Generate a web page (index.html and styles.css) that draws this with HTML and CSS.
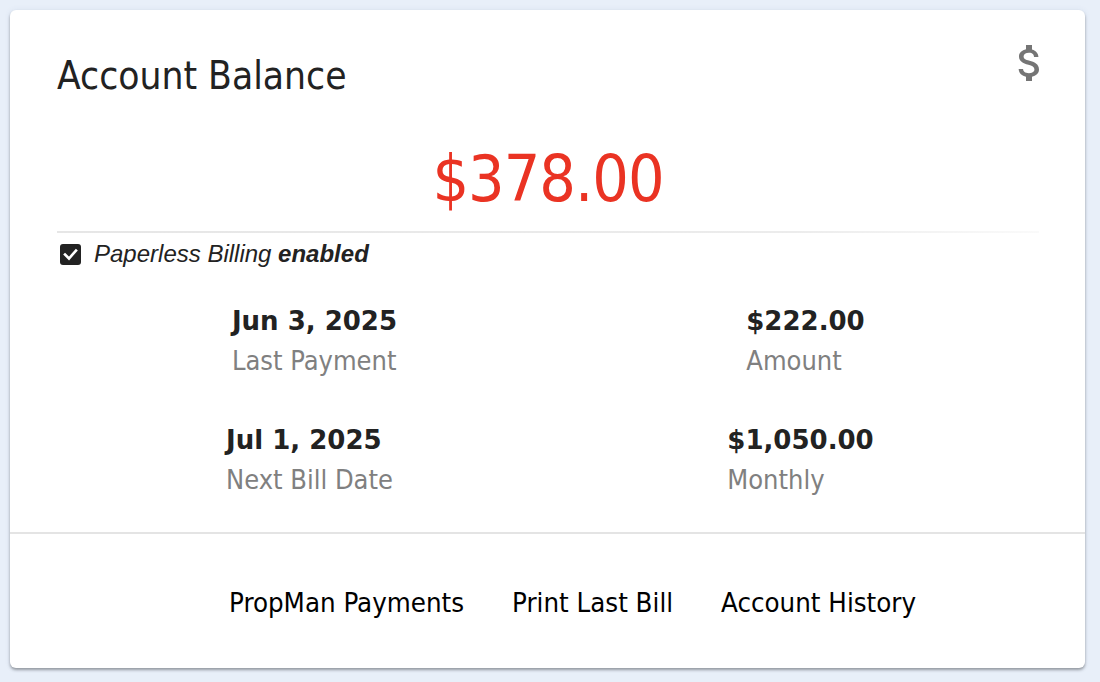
FILE: index.html
```html
<!DOCTYPE html>
<html lang="en">
<head>
<meta charset="utf-8">
<title>Account Balance</title>
<link rel="stylesheet" href="styles.css">
</head>
<body>
<div class="card">
  <div class="card-body">
    <div class="card-header">
      <h2 class="card-title">Account Balance</h2>
      <svg class="card-icon" viewBox="0 0 24 24" width="48" height="48" aria-hidden="true">
        <path fill="#757575" d="M11.8 10.9c-2.27-.59-3-1.2-3-2.15 0-1.09 1.01-1.85 2.7-1.85 1.78 0 2.44.85 2.5 2.1h2.21c-.07-1.72-1.12-3.3-3.21-3.81V3h-3v2.16c-1.94.42-3.5 1.68-3.5 3.61 0 2.31 1.91 3.46 4.7 4.13 2.5.6 3 1.48 3 2.41 0 .69-.49 1.79-2.7 1.79-2.06 0-2.87-.92-2.98-2.1h-2.2c.12 2.19 1.76 3.42 3.68 3.83V21h3v-2.15c1.95-.37 3.5-1.5 3.5-3.55 0-2.84-2.43-3.81-4.7-4.4z"/>
      </svg>
    </div>
    <div class="balance">$378.00</div>
    <div class="divider"></div>
    <div class="paperless">
      <svg class="check" viewBox="0 0 21 21" width="21" height="21" aria-hidden="true">
        <rect x="0" y="0" width="21" height="21" rx="3" fill="#222"/>
        <polyline points="5,10.5 9,14.5 16,6.5" fill="none" stroke="#fff" stroke-width="2.6" stroke-linecap="square"/>
      </svg>
      <span class="paperless-text">Paperless Billing <b>enabled</b></span>
    </div>
    <div class="stat-row stat-row-first">
      <div class="stat">
        <div class="stat-inner">
          <div class="stat-value">Jun 3, 2025</div>
          <div class="stat-label">Last Payment</div>
        </div>
      </div>
      <div class="stat">
        <div class="stat-inner">
          <div class="stat-value">$222.00</div>
          <div class="stat-label">Amount</div>
        </div>
      </div>
    </div>
    <div class="stat-row stat-row-second">
      <div class="stat">
        <div class="stat-inner">
          <div class="stat-value">Jul 1, 2025</div>
          <div class="stat-label">Next Bill Date</div>
        </div>
      </div>
      <div class="stat">
        <div class="stat-inner">
          <div class="stat-value">$1,050.00</div>
          <div class="stat-label">Monthly</div>
        </div>
      </div>
    </div>
  </div>
  <div class="card-actions">
    <a class="action" href="#">PropMan Payments</a>
    <a class="action" href="#">Print Last Bill</a>
    <a class="action" href="#">Account History</a>
  </div>
</div>
</body>
</html>
```
FILE: styles.css
```css
html, body {
  margin: 0;
  padding: 0;
  background: #e8eff9;
}
body {
  padding: 10px;
  font-family: "DejaVu Sans Condensed", "DejaVu Sans", sans-serif;
}
.card {
  width: 1075px;
  background: #fff;
  border-radius: 6px;
  box-shadow: 0 2px 3px rgba(0, 0, 0, 0.35), 0 0 6px rgba(60, 90, 140, 0.08);
  display: flex;
  flex-direction: column;
}
.card-body {
  padding: 29px 46px 28px 47px;
}
.card-header {
  display: flex;
  justify-content: space-between;
  align-items: flex-start;
}
.card-title {
  margin: 0;
  padding-top: 13px;
  font-weight: normal;
  font-size: 38.6px;
  line-height: 48px;
  color: #222;
}
.card-icon {
  display: block;
  margin-right: -15px;
}
.balance {
  margin-top: 39px;
  text-align: center;
  font-size: 64px;
  line-height: 80px;
  letter-spacing: -1px;
  color: #ea3323;
}
.divider {
  margin-top: 12px;
  height: 2px;
  background: linear-gradient(to right, #e6e6e6 0%, #ececec 75%, #fafafa 100%);
}
.paperless {
  margin-top: 8px;
  display: flex;
  align-items: center;
  height: 26px;
}
.check {
  display: block;
  margin-left: 3px;
  margin-right: 13px;
}
.paperless-text {
  font-family: "Liberation Sans", Arial, sans-serif;
  font-style: italic;
  font-size: 24px;
  line-height: 26px;
  color: #222;
}
.paperless-text b {
  font-weight: bold;
}
.stat-row {
  display: grid;
  grid-template-columns: 1fr 1fr;
}
.stat-row-first {
  margin: 38px -12px 0 12px;
}
.stat-row-second {
  margin: 39px -7px 0 7px;
}
.stat {
  display: flex;
  justify-content: center;
}
.stat-inner {
  text-align: left;
}
.stat-value {
  font-family: "DejaVu Sans", sans-serif;
  font-weight: bold;
  font-size: 26px;
  line-height: 32px;
  color: #222;
}
.stat-label {
  font-size: 27px;
  line-height: 48px;
  color: #808080;
}
.card-actions {
  border-top: 2px solid #e4e4e4;
  padding: 53px 0 49px 50px;
  display: flex;
  justify-content: center;
  gap: 48px;
}
.action {
  font-size: 27.4px;
  line-height: 32px;
  color: #000;
  text-decoration: none;
}
```
